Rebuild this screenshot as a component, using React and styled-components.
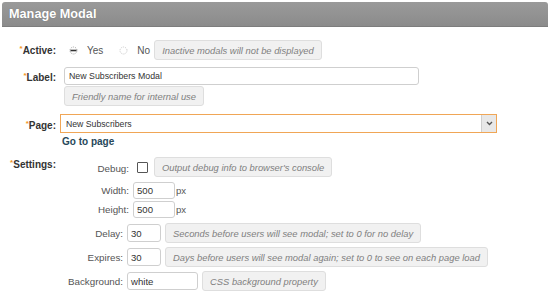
import React from "react";
import styled, { createGlobalStyle } from "styled-components";

const Global = createGlobalStyle`
  html, body { margin: 0; padding: 0; background: #fff; }
  body { font-family: "Liberation Sans", Arial, sans-serif; }
  * { box-sizing: border-box; }
`;

const Page = styled.div`
  width: 550px;
  height: 292px;
  padding: 2px 2px 0 2px;
  overflow: hidden;
`;

const Header = styled.div`
  height: 25px;
  border-radius: 3px 3px 0 0;
  background: linear-gradient(#9a9a9a, #8b8b8b);
  border-bottom: 1px solid #7d7d7d;
  display: flex;
  align-items: center;
  padding-left: 7px;
  color: #fff;
  font-weight: bold;
  font-size: 12.7px;
  text-shadow: 0 0 1px rgba(0,0,0,0.25);
`;

const Form = styled.div`
  display: flex;
  flex-direction: column;
  padding-top: ${p => p.$top}px;
`;

const Field = styled.div`
  display: grid;
  grid-template-columns: 54px 1fr;
  column-gap: 5px;
  align-items: ${p => (p.$top ? "start" : "center")};
  margin-top: ${p => p.$mt || 0}px;
`;

const Label = styled.div`
  text-align: right;
  font-weight: bold;
  font-size: 10px;
  color: #333;
  line-height: ${p => p.$lh || 18}px;
`;

const Star = styled.span`
  color: #f39422;
  font-size: 8px;
  vertical-align: 3px;
`;

const Content = styled.div`
  display: flex;
  flex-direction: ${p => (p.$column ? "column" : "row")};
  align-items: ${p => (p.$column ? "flex-start" : "center")};
  padding-left: ${p => p.$pl || 0}px;
`;

const RadioOpt = styled.label`
  display: flex;
  align-items: center;
  gap: 9px;
  font-size: 10px;
  color: #555;
  margin-right: ${p => p.$mr || 0}px;
`;

const Hint = styled.div`
  height: 20px;
  display: flex;
  align-items: center;
  padding: 0 7px;
  background: #f1f1f1;
  border: 1px solid #dedede;
  border-radius: 3px;
  font-style: italic;
  font-size: 9.4px;
  color: #808080;
  white-space: nowrap;
  margin-left: ${p => p.$ml || 0}px;
  margin-top: ${p => p.$mt || 0}px;
`;

const TextInput = styled.div`
  width: ${p => p.$w}px;
  height: ${p => p.$h || 18}px;
  border: 1px solid #cfcfcf;
  border-radius: 3px;
  background: #fff;
  display: flex;
  align-items: center;
  padding-left: ${p => p.$pl || 3}px;
  font-size: ${p => p.$fs || 8.8}px;
  color: #333;
`;

const Select = styled.div`
  width: 437px;
  height: 19px;
  border: 1px solid #f0a656;
  background: #fff;
  display: flex;
  align-items: center;
  font-size: 8.7px;
  color: #333;
  margin-left: -1px;
`;

const SelectText = styled.div`
  flex: 1;
  padding-left: 5px;
`;

const Arrow = styled.div`
  width: 15px;
  height: 100%;
  background: #e8e8e8;
  border-left: 1px solid #cfcfcf;
  display: flex;
  align-items: center;
  justify-content: center;
`;

const Link = styled.a`
  font-weight: bold;
  font-size: 10px;
  color: #26485a;
  text-decoration: none;
  margin-top: 3px;
  margin-left: 1px;
`;

const SubGrid = styled.div`
  display: grid;
  grid-template-columns: ${p => p.$lw}px auto;
  column-gap: 4px;
  row-gap: ${p => p.$gap}px;
  align-items: center;
  justify-content: start;
  margin-top: ${p => p.$mt || 0}px;
`;

const SubLabel = styled.div`
  text-align: right;
  font-size: 9.8px;
  color: #555;
`;

const SubContent = styled.div`
  display: flex;
  align-items: center;
  margin-bottom: ${p => p.$mb || 0}px;
`;

const Check = styled.div`
  width: 11px;
  height: 11px;
  border: 1px solid #555;
  border-radius: 1px;
  background: #fff;
  margin-left: 4px;
`;

const Unit = styled.span`
  font-size: 9.6px;
  color: #555;
  margin-left: 1px;
`;

const RadioIcon = ({ checked }) => (
  <svg width="9" height="9" viewBox="0 0 9 9">
    <circle cx="4.5" cy="4.5" r="3.5" fill="none" stroke={checked ? "#9a9a9a" : "#c4c4c4"} strokeWidth="1" strokeDasharray="1 1.2" />
    {checked && <line x1="1.5" y1="4.5" x2="7.5" y2="4.5" stroke="#333" strokeWidth="1.6" />}
  </svg>
);

const Chevron = () => (
  <svg width="7" height="5" viewBox="0 0 7 5">
    <path d="M1 1 L3.5 3.5 L6 1" fill="none" stroke="#555" strokeWidth="1.4" />
  </svg>
);

export default function App() {
  return (
    <>
      <Global />
      <Page>
        <Header>Manage Modal</Header>
        <Form $top={13}>
          <Field>
            <Label><Star>*</Star>Active:</Label>
            <Content $pl={8}>
              <RadioOpt $mr={16}><RadioIcon checked />Yes</RadioOpt>
              <RadioOpt $mr={4}><RadioIcon />No</RadioOpt>
              <Hint>Inactive modals will not be displayed</Hint>
            </Content>
          </Field>

          <Field $top $mt={7}>
            <Label><Star>*</Star>Label:</Label>
            <Content $column $pl={3}>
              <TextInput $w={355} $pl={4}>New Subscribers Modal</TextInput>
              <Hint $mt={1}>Friendly name for internal use</Hint>
            </Content>
          </Field>

          <Field $top $mt={8}>
            <Label $lh={19}><Star>*</Star>Page:</Label>
            <Content $column>
              <Select>
                <SelectText>New Subscribers</SelectText>
                <Arrow><Chevron /></Arrow>
              </Select>
              <Link href="#">Go to page</Link>
            </Content>
          </Field>

          <Field $top $mt={10}>
            <Label $lh={11}><Star>*</Star>Settings:</Label>
            <Content $column>
              <SubGrid $lw={68} $gap={2}>
                <SubLabel>Debug:</SubLabel>
                <SubContent $mb={3}>
                  <Check />
                  <Hint $ml={6}>Output debug info to browser's console</Hint>
                </SubContent>
                <SubLabel>Width:</SubLabel>
                <SubContent>
                  <TextInput $w={42} $h={17} $fs={9.6}>500</TextInput>
                  <Unit>px</Unit>
                </SubContent>
                <SubLabel>Height:</SubLabel>
                <SubContent>
                  <TextInput $w={42} $h={17} $fs={9.6}>500</TextInput>
                  <Unit>px</Unit>
                </SubContent>
              </SubGrid>
              <SubGrid $lw={62} $gap={4} $mt={5}>
                <SubLabel>Delay:</SubLabel>
                <SubContent>
                  <TextInput $w={34} $fs={9.6}>30</TextInput>
                  <Hint $ml={4}>Seconds before users will see modal; set to 0 for no delay</Hint>
                </SubContent>
                <SubLabel>Expires:</SubLabel>
                <SubContent>
                  <TextInput $w={34} $fs={9.6}>30</TextInput>
                  <Hint $ml={4}>Days before users will see modal again; set to 0 to see on each page load</Hint>
                </SubContent>
                <SubLabel>Background:</SubLabel>
                <SubContent>
                  <TextInput $w={71} $fs={9.6}>white</TextInput>
                  <Hint $ml={4}>CSS background property</Hint>
                </SubContent>
              </SubGrid>
            </Content>
          </Field>
        </Form>
      </Page>
    </>
  );
}
